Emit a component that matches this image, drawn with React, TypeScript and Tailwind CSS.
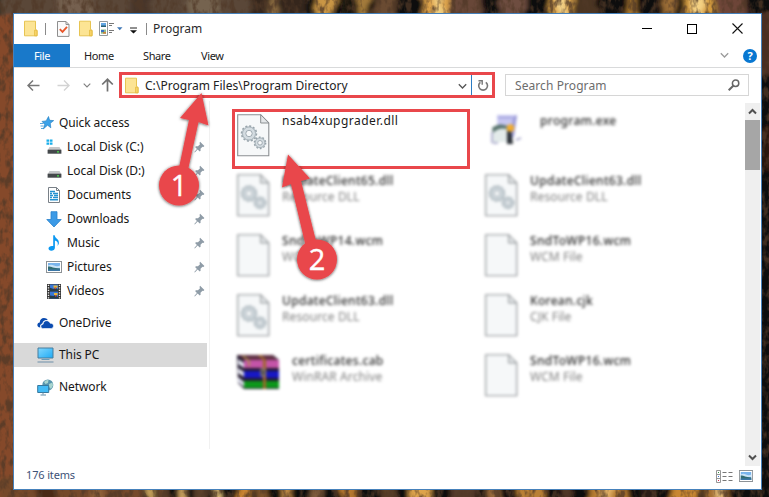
import React from 'react';

type FileKind = 'dll' | 'blank' | 'rar' | 'exe';

interface FileEntry {
  name: string;
  type?: string;
  kind: FileKind;
  blurred?: boolean;
}

const FILES: FileEntry[] = [
  { name: 'nsab4xupgrader.dll', kind: 'dll' },
  { name: 'program.exe', kind: 'exe', blurred: true },
  { name: 'UpdateClient65.dll', type: 'Resource DLL', kind: 'dll', blurred: true },
  { name: 'UpdateClient63.dll', type: 'Resource DLL', kind: 'dll', blurred: true },
  { name: 'SndToWP14.wcm', type: 'WCM File', kind: 'blank', blurred: true },
  { name: 'SndToWP16.wcm', type: 'WCM File', kind: 'blank', blurred: true },
  { name: 'UpdateClient63.dll', type: 'Resource DLL', kind: 'dll', blurred: true },
  { name: 'Korean.cjk', type: 'CJK File', kind: 'blank', blurred: true },
  { name: 'certificates.cab', type: 'WinRAR Archive', kind: 'rar', blurred: true },
  { name: 'SndToWP16.wcm', type: 'WCM File', kind: 'blank', blurred: true },
];

// x, width, color
const TOP_STRIPES: [number, number, string][] = [
  [0, 250, '#5a4638'], [60, 30, '#75614f'], [130, 22, '#46362c'], [190, 30, '#75634f'],
  [250, 60, '#35261b'], [272, 8, '#8a6a40'], [316, 18, '#c99645'], [340, 12, '#1d150e'],
  [358, 12, '#a37a3a'], [376, 20, '#6b4c33'], [424, 26, '#dca149'], [434, 8, '#f2cf80'],
  [450, 30, '#674637'], [500, 26, '#6e4d40'], [550, 24, '#dba448'], [558, 8, '#f3d187'],
  [576, 22, '#4c3424'], [626, 12, '#a5742f'], [662, 12, '#9a6c35'], [684, 30, '#d29a3d'],
  [694, 9, '#f4d183'], [715, 30, '#6d4537'],
];

const BOTTOM_STRIPES: [number, number, string][] = [
  [0, 145, '#754a2c'], [40, 14, '#492a18'], [90, 16, '#8f6038'], [149, 5, '#c9a35c'],
  [160, 10, '#6d4a2d'], [179, 8, '#d4aa63'], [196, 8, '#5b402c'], [214, 6, '#f1ce82'],
  [236, 14, '#c98432'], [256, 14, '#7c522b'], [282, 13, '#c08a45'], [310, 12, '#7d5a3b'],
  [340, 18, '#b5772e'], [380, 14, '#5c3f26'], [408, 22, '#dda34c'], [450, 26, '#563a2a'],
  [490, 12, '#98693a'], [520, 24, '#b98034'], [560, 12, '#513626'], [586, 40, '#b67c32'],
  [600, 12, '#e4b266'], [640, 14, '#2a1b12'], [670, 26, '#c98731'], [704, 28, '#a56f32'],
  [716, 6, '#ebc581'],
];

const Wallpaper: React.FC = () => (
  <svg className="absolute inset-0 h-full w-full" viewBox="0 0 769 497" preserveAspectRatio="none">
    <defs>
      <filter id="grain" x="0" y="0" width="100%" height="100%">
        <feTurbulence type="fractalNoise" baseFrequency="0.06 0.05" numOctaves="2" seed="7" result="noise" />
        <feDisplacementMap in="SourceGraphic" in2="noise" scale="14" xChannelSelector="R" yChannelSelector="G" />
        <feGaussianBlur stdDeviation="2.4 1.5" />
      </filter>
      <filter id="fiber" x="0" y="0" width="100%" height="100%">
        <feTurbulence type="fractalNoise" baseFrequency="0.16 0.09" numOctaves="3" seed="12" />
        <feColorMatrix values="0 0 0 0 0.08  0 0 0 0 0.04  0 0 0 0 0.02  3.5 0 0 0 -1.5" />
      </filter>
    </defs>
    <g filter="url(#grain)">
      <rect x="-10" y="-10" width="800" height="520" fill="#100d0a" />
      {TOP_STRIPES.map(([x, w, c]) => (
        <rect key={x} x={x} y="-10" width={w} height="35" fill={c} />
      ))}
      <rect x="-10" y="14" width="35" height="490" fill="#85492a" />
      {BOTTOM_STRIPES.map(([x, w, c]) => (
        <rect key={x} x={x} y="478" width={w} height="30" fill={c} />
      ))}
      <rect x="755" y="12" width="20" height="60" fill="#4a2d20" />
      <rect x="762" y="130" width="20" height="40" fill="#2b150e" />
    </g>
    <rect width="769" height="497" filter="url(#fiber)" opacity="0.75" />
  </svg>
);

const Folder: React.FC = () => (
  <svg width="14" height="17" viewBox="0 0 14 17">
    <path d="M.5 1.2h11v8.3l1.6 1v5.3H.5z" fill="#fce494" stroke="#e7c452" />
    <path d="M10.6 10.2h2.4v5.6h-2.4z" fill="#f9d56c" stroke="#e2b93c" strokeWidth=".8" />
  </svg>
);

const Chevron: React.FC<{ color: string; size?: number }> = ({ color, size = 9 }) => (
  <svg width={size} height="7" viewBox="0 0 9 7">
    <path d="M.8 1.3 4.5 5 8.2 1.3" fill="none" stroke={color} strokeWidth="1.3" />
  </svg>
);

const Thumb: React.FC<{ w: number; h: number }> = ({ w, h }) => (
  <svg width={w} height={h} viewBox="0 0 16 12" preserveAspectRatio="none">
    <rect x=".5" y=".5" width="15" height="11" fill="#fff" stroke="#8d9296" />
    <path d="M2 2h12v8H2z" fill="#79b4ec" />
    <path d="M2 4.5q3-1.5 6 0t6 0V7H2z" fill="#c9e2f6" />
    <path d="M2 5.5c4 0 5 1.8 12 2V10H2z" fill="#316c72" />
    <path d="M2 8.4h12V10H2z" fill="#3c77a7" />
  </svg>
);

const Pin: React.FC = () => (
  <svg width="11" height="12" viewBox="0 0 11 12">
    <path d="M6.1.8 10.4 5l-1 .9-.9-.2-2 2 .1 2-.9.9-2-2L.8 11.4.3 11l2.6-3-1.8-1.9.9-.9 2 .1 2-2-.5-1.4z" fill="#8f9ca7" />
  </svg>
);

const Disk: React.FC<{ system?: boolean }> = ({ system }) => (
  <svg width="16" height="16" viewBox="0 0 16 16">
    {system && <path d="M.5.5h2.6v2.3H.5zM3.8.5h2.7v2.3H3.8zM.5 3.5h2.6v2.3H.5zM3.8 3.5h2.7v2.3H3.8z" fill="#18aeea" />}
    <path d="M3.5 8h10l1.7 3H1.8z" fill="#c5c7c9" />
    <path d="M1.6 10.7h13.8v4H1.6z" fill="#44484b" />
    <path d="M11 12.3h2v1.2h-2z" fill="#4be34b" />
  </svg>
);

const Documents: React.FC = () => (
  <svg width="14" height="16" viewBox="0 0 14 16">
    <path d="M1.5.5h8l3 3v12h-11z" fill="#fff" stroke="#798087" />
    <path d="M9.5.5v3h3" fill="none" stroke="#798087" />
    <path d="M3 4.5h5M3 6.5h2M6 6.5h5M3 8.5h3M7 8.500h4M3 10.5h2M6 10.5h5M3 12.8h8" stroke="#2491d0" strokeWidth="1.4" />
  </svg>
);

const Downloads: React.FC = () => (
  <svg width="16" height="17" viewBox="0 0 16 17">
    <path d="M5 .7h6v7.8h4.2L8 16 .8 8.5H5z" fill="#3c9ae6" stroke="#2680cb" strokeWidth=".8" />
  </svg>
);

const Music: React.FC = () => (
  <svg width="12" height="16" viewBox="0 0 12 16">
    <path d="M5.2.2h1.5c.2 3 4.400 3.5 4.2 7.6 0 1.3-.7 2.4-1.4 3.2.9-3 .1-4.7-2.6-5.4v7.1c0 1.8-1.7 3-3.6 3C1.5 15.7.5 14.7.5 13.5c0-1.8 2.3-3 4.7-2.4z" fill="#0a98f2" />
  </svg>
);

const Videos: React.FC = () => (
  <svg width="14" height="15" viewBox="0 0 14 15">
    <path d="M0 0h14v15H0z" fill="#343434" />
    <path d="M1.5.8v14M12.5.8v14" stroke="#f1f1f1" strokeWidth="1.4" strokeDasharray="1.3 1.2" />
    <path d="M3 .5h8v6.7H3zM3 7.8h8v6.7H3z" fill="#3978d7" />
    <path d="M6.5 1.5h4v2.2h-4zM7 9h3.5v2H7z" fill="#e6b739" />
    <path d="M3 3.8 6.5 5l2-1 2.5 1.5v1.7H3zM3 11.5l3.5.5 2-1 2.5 2v1.5H3z" fill="#253c49" />
    <path d="M7.5 3.5H9V5H7.5zM8 11h1.5v1.5H8z" fill="#cf4938" />
  </svg>
);

const QuickStar: React.FC = () => (
  <svg width="14" height="14" viewBox="0 0 14 14">
    <path d="M8.5.5 9.6 4.3 13.7 4.6 10.3 7.3 10.8 11.8 7.6 9.2 3.5 12.8 4.7 8.2 2 5.4 6.1 4.9z" fill="#3ba2e9" stroke="#1979bd" strokeWidth=".6" />
    <path d="M0 7.5h3.5M.5 10h3M1 12.5h3" stroke="#2f91d3" strokeWidth=".8" />
  </svg>
);

const OneDrive: React.FC = () => (
  <svg width="17" height="12" viewBox="0 0 17 12">
    <path d="M3.4 10.5C1 10.5.1 9 .4 7.6c.2-1.3 1.2-2 2.3-2.1C2.9 2.7 4.6 1 7 1c1.7 0 3.1.8 3.9 2.2-3-.6-5.2.9-5.5 3.4-2 .2-2.7 2.2-2 3.9z" fill="#0a4bb0" />
    <path d="M6.3 11.5c-1.5 0-2.5-.9-2.4-2.3.1-1.2 1-2 2.2-2C6.2 5.1 7.7 3.7 9.6 3.7c1.7 0 3 1 3.5 2.5 2-.1 3.4 1 3.4 2.7 0 1.6-1.2 2.6-2.8 2.6z" fill="#0a4bb0" stroke="#fff" strokeWidth=".6" />
  </svg>
);

const Monitor: React.FC = () => (
  <svg width="17" height="16" viewBox="0 0 17 16">
    <defs>
      <linearGradient id="screen" x2="1" y2="1">
        <stop stopColor="#82d8ff" />
        <stop offset="1" stopColor="#1eaaf5" />
      </linearGradient>
    </defs>
    <path d="M1 1h15v10H1z" fill="url(#screen)" stroke="#477d9d" />
    <path d="M4.5 12.5h8" stroke="#6b9cba" />
    <path d="M.5 15h16" stroke="#7e9bb0" strokeWidth="1.2" />
  </svg>
);

const Network: React.FC = () => (
  <svg width="17" height="17" viewBox="0 0 17 17">
    <circle cx="10.8" cy="6" r="5.5" fill="#5895ae" />
    <path d="M7 3q2-2.5 4.5-2l-.5 3-2.5 1zM12 5l3.5-1.5.5 3-2 3.5-2-2z" fill="#a9d5cf" />
    <path d="M.7 6.5h11v7H.7z" fill="#43bbf5" stroke="#36799f" />
    <path d="M6 13.5v2M3.5 16H9" stroke="#658da7" />
  </svg>
);

const PageIcon: React.FC<{ gears?: boolean }> = ({ gears }) => (
  <svg width="33" height="43" viewBox="0 0 33 43">
    <path d="M.7.7h23L31.8 9v32.8H.7z" fill="#f6f8f9" stroke="#8b8f92" strokeWidth="1.1" />
    <path d="M23.7.7V9h8.1z" fill="#e4e7e9" stroke="#8b8f92" />
    {gears && (
      <g fill="#d4dce1" stroke="#98a4ab">
        <circle cx="12" cy="19.5" r="7.5" strokeWidth="1.5" strokeDasharray="2 1.92" />
        <circle cx="12" cy="19.5" r="6.5" strokeWidth=".7" />
        <circle cx="12" cy="19.5" r="3.2" fill="#f6f8f9" strokeWidth=".9" />
        <circle cx="23" cy="28.8" r="5.7" strokeWidth="1.4" strokeDasharray="1.7 1.88" />
        <circle cx="23" cy="28.8" r="4.8" strokeWidth=".7" />
        <circle cx="23" cy="28.8" r="2.3" fill="#f6f8f9" strokeWidth=".9" />
      </g>
    )}
  </svg>
);

const RarIcon: React.FC = () => (
  <svg width="43" height="36" viewBox="0 0 43 36">
    <path d="M0 1h36l6 5v29H7L1 29z" fill="#251b30" />
    <path d="M1 1h34l6 5H7z" fill="#603044" />
    <path d="M7 6h35v8H7z" fill="#c454a8" />
    <path d="M7 17h35v7H7z" fill="#1718c4" />
    <path d="M7 27h35v7H7z" fill="#0c981a" />
    <path d="m1 5 6 4v5l-6-4zM1 14l6 4v5l-6-4zM1 23l6 5v5l-6-5z" fill="#e2e5f1" />
    <path d="m21 1 5 5v29h3V6l-5-5z" fill="#a0682c" />
    <path d="M24 15h4v7h-4z" fill="#444" stroke="#a89c84" />
    <path d="m6 2 6 5v5" fill="none" stroke="#a89c40" strokeWidth="1.5" />
  </svg>
);

const ExeIcon: React.FC = () => (
  <svg width="33" height="34" viewBox="0 0 33 34">
    <path d="M7 2h20l-3 21-5 7-11-6z" fill="#c6c6f0" />
    <path d="m23 4 4-2-3 21-3 3z" fill="#9b9bd8" />
    <path d="M8 4h14v1H8z" fill="#8d8dd2" />
    <path d="M3 15h14l4 14H3z" fill="#e3ebea" />
    <path d="M2 15q7-6 15-2v3Q8 14 3 20z" fill="#54706a" />
    <path d="m17 17 4-1 2 15h-6z" fill="#2c3138" />
    <circle cx="20.5" cy="15" r="3.8" fill="#f0ac30" />
    <path d="M2 19v11M3 30h5M26 27l5-2" stroke="#9c9cc4" strokeWidth="1.5" />
  </svg>
);

const SIDEBAR = [
  { label: 'Local Disk (C:)', icon: <Disk system /> },
  { label: 'Local Disk (D:)', icon: <Disk /> },
  { label: 'Documents', icon: <Documents /> },
  { label: 'Downloads', icon: <Downloads /> },
  { label: 'Music', icon: <Music /> },
  { label: 'Pictures', icon: <Thumb w={16} h={12} /> },
  { label: 'Videos', icon: <Videos /> },
];

const ROOTS = [
  { label: 'OneDrive', icon: <OneDrive /> },
  { label: 'This PC', icon: <Monitor />, active: true },
  { label: 'Network', icon: <Network /> },
];

const TitleBar: React.FC = () => (
  <div className="flex h-[29px] shrink-0 items-center pl-[10px] pr-[18px]">
    <Folder />
    <span className="ml-[7px] h-3 w-px bg-[#8a8a8a]" />
    <svg className="ml-[11px]" width="13" height="17" viewBox="0 0 13 17">
      <path d="M.5 1.5H9l3 3v11.9H.5z" fill="#fafafa" stroke="#8e8e8e" />
      <path d="M9 1.5v3h3" fill="none" stroke="#8e8e8e" />
      <path d="m2.8 9.2 2.7 2.7L10 6.8" fill="none" stroke="#e8562a" strokeWidth="1.8" />
    </svg>
    <div className="ml-[9px]"><Folder /></div>
    <svg className="ml-[6px]" width="24" height="16" viewBox="0 0 24 16">
      <path d="M.5.5h8v14h-8z" fill="#fff" stroke="#959a9c" />
      <path d="M2 2h5v4H2z" fill="#64a7e4" />
      <path d="M2 4.5h5V6H2z" fill="#286176" />
      <path d="M2 8.5h5v4.2H2z" fill="#8dbc8a" />
      <path d="M2 9h3v2H2z" fill="#376fc3" />
      <path d="M4 11h3v1.7H4z" fill="#cb833e" />
      <path d="M10 2.500h5M10 4.5h3M10 9.5h5M10 11.5h3" stroke="#777" />
      <path d="M18 6.300h5.5l-2.750 3z" fill="#3f77b6" />
    </svg>
    <svg className="ml-[6px] mt-[3px]" width="9" height="7" viewBox="0 0 9 7">
      <path d="M1 1h7" stroke="#222" />
      <path d="M1 3.3h7L4.5 6.6z" fill="#111" />
    </svg>
    <span className="ml-[8px] h-3 w-px bg-[#8a8a8a]" />
    <span className="ml-[6px] text-[12px] text-[#2b2b2b]">Program</span>
    <div className="ml-auto flex items-center gap-[35px]">
      <span className="h-px w-[10px] bg-black" />
      <span className="h-[10px] w-[10px] border border-black" />
      <svg width="11" height="11" viewBox="0 0 11 11">
        <path d="m.5.5 10 10m0-10-10 10" stroke="#111" strokeWidth="1.1" />
      </svg>
    </div>
  </div>
);

const RibbonTabs: React.FC = () => (
  <div className="mt-px flex h-6 shrink-0 items-stretch border-b border-[#d9dadb] text-[11px] leading-6 tracking-[-0.4px] text-[#202020]">
    <div className="w-14 bg-[#1979ca] text-center text-white">File</div>
    <span className="ml-[14px] w-[59px]">Home</span>
    <span className="w-[58px]">Share</span>
    <span>View</span>
    <div className="ml-auto flex items-center gap-[14px] pr-1">
      <Chevron color="#9b9b9b" />
      <span className="flex h-[14px] w-[14px] items-center justify-center rounded-full bg-[#0877d1] text-[11px] font-bold leading-none tracking-normal text-white">?</span>
    </div>
  </div>
);

const AddressRow: React.FC = () => (
  <div className="flex h-[33px] shrink-0 items-center pl-[13px] pr-3 pt-px">
    <svg width="13" height="13" viewBox="0 0 13 13" fill="none" stroke="#777" strokeWidth="1.5">
      <path d="M12.5 6.5H1M6 1.5l-5 5 5 5" />
    </svg>
    <svg className="ml-[17px]" width="13" height="13" viewBox="0 0 13 13" fill="none" stroke="#d3d3d3" strokeWidth="1.4">
      <path d="M.5 6.5H12M7 1.5l5 5-5 5" />
    </svg>
    <div className="ml-[13px] flex"><Chevron color="#808080" size={8} /></div>
    <svg className="ml-[10px]" width="13" height="14" viewBox="0 0 13 14" fill="none" stroke="#717171" strokeWidth="1.7">
      <path d="M6.5 13.5V1.3M1.2 6.5l5.3-5.2 5.3 5.2" />
    </svg>
    <div className="ml-[5px] flex h-[26px] w-[376px] items-center border-[3px] border-[#e9474b] bg-white">
      <div className="ml-[3px]"><Folder /></div>
      <span className="ml-[6px] whitespace-nowrap pt-px text-[12px] tracking-[0.04px] text-[#222]">C:\Program Files\Program Directory</span>
      <div className="ml-auto mr-[4px] mt-[2px]"><Chevron color="#555" /></div>
      <div className="flex h-full w-[21px] items-center justify-center border-l border-[#2b7cc4] pl-px">
        <svg width="12" height="13" viewBox="0 0 12 13" fill="none" stroke="#777" strokeWidth="1.6">
          <path d="M8.8 3.3a4.4 4.4 0 1 1-5.4 0" />
          <path d="M1.5 1.8h3.7v3.9" strokeWidth="1.4" />
        </svg>
      </div>
    </div>
    <div className="ml-[10px] flex h-[22px] flex-1 items-center justify-between border border-[#d6d6d6] pl-[9px] pr-[8px]">
      <span className="pt-px text-[12px] tracking-[0.08px] text-[#6d6d6d]">Search Program</span>
      <svg width="12" height="12" viewBox="0 0 12 12" fill="none" stroke="#666">
        <circle cx="7.6" cy="4.2" r="3.2" strokeWidth="1.5" />
        <path d="M5.3 6.7.7 11.2" strokeWidth="2" />
      </svg>
    </div>
  </div>
);

const Sidebar: React.FC = () => (
  <div className="h-[348px] w-[196px] shrink-0 border-r border-[#f1f1f1] pt-[10px] text-[12px] leading-6 text-[#161616]">
    <div className="flex h-6 items-center pl-[26px]">
      <QuickStar />
      <span className="ml-[5px] tracking-[-0.1px]">Quick access</span>
    </div>
    {SIDEBAR.map((item) => (
      <div key={item.label} className="flex h-6 items-center pl-[31px] pr-[4px]">
        <span className="flex w-[17px] justify-center">{item.icon}</span>
        <span className="ml-[5px] flex-1 tracking-[-0.06px]">{item.label}</span>
        <Pin />
      </div>
    ))}
    {ROOTS.map((item) => (
      <div
        key={item.label}
        className={`mr-[2px] mt-2 flex h-6 items-center pl-[23px] ${item.active ? 'bg-[#d9d9d9]' : ''}`}
      >
        {item.icon}
        <span className="ml-[5px] tracking-[-0.1px]">{item.label}</span>
      </div>
    ))}
  </div>
);

const FileTile: React.FC<{ file: FileEntry }> = ({ file }) => {
  if (!file.blurred) {
    return (
      <div className="-ml-[5px] -mt-[5px] flex h-[60px] w-[238px] border-[3px] border-[#e9474b] pl-[2px] pt-[2px]">
        <PageIcon gears />
        <span className="-mt-px ml-[12px] text-[12px] leading-[16px] tracking-[0.46px] text-[#1b1b1b]">{file.name}</span>
      </div>
    );
  }

  return (
    <div className="flex h-[60px] blur-[1.4px]">
      {file.kind === 'dll' && <PageIcon gears />}
      {file.kind === 'blank' && <PageIcon />}
      {file.kind === 'rar' && <RarIcon />}
      {file.kind === 'exe' && <div className="-mt-px ml-[5px] w-[38px]"><ExeIcon /></div>}
      <div className="ml-[12px] text-[12px] leading-[16px]">
        <div className="-mt-px font-medium tracking-[0.3px] text-[#2b2b2b]">{file.name}</div>
        <div className="tracking-[0.1px] text-[#808080]">{file.type}</div>
      </div>
    </div>
  );
};

const ScrollBar: React.FC = () => (
  <div className="mr-px mt-[2px] flex h-[363px] w-[15px] shrink-0 flex-col items-center bg-[#efefef]">
    <svg className="my-[4px]" width="9" height="9" viewBox="0 0 9 9">
      <path d="M1 6.5 4.5 3 8 6.5" fill="none" stroke="#505050" strokeWidth="2" />
    </svg>
    <div className="h-[50px] w-full bg-[#a6a6a6]" />
    <svg className="mb-[4px] mt-auto" width="9" height="9" viewBox="0 0 9 9">
      <path d="M1 2.5 4.5 6 8 2.5" fill="none" stroke="#505050" strokeWidth="2" />
    </svg>
  </div>
);

const StatusBar: React.FC = () => (
  <div className="flex h-[20px] items-center pl-[12px] pr-[8px]">
    <span className="-mt-[2px] text-[11px] tracking-[-0.15px] text-[#3d5277]">176 items</span>
    <svg className="ml-auto mt-px" width="17" height="14" viewBox="0 0 17 14">
      <path d="M.5.5h4v12h-4zM.5 4.5h4M.5 8.5h4" fill="none" stroke="#969696" />
      <path d="M6.5 2.5h4M12.5 2.5h4M6.5 6.5h4M12.5 6.5h4M6.5 10.5h4M12.5 10.5h4" stroke="#777" />
      <path d="M2 2h1v1H2z" fill="#329445" />
      <path d="M2 6h1v1H2z" fill="#3876dd" />
      <path d="M2 10h1v1H2z" fill="#db2c4f" />
    </svg>
    <div className="ml-[6px]"><Thumb w={14} h={12} /></div>
  </div>
);

const Callouts: React.FC = () => (
  <svg className="pointer-events-none absolute inset-0" width="769" height="497" viewBox="0 0 769 497">
    <defs>
      <filter id="drop" x="-30%" y="-30%" width="160%" height="160%">
        <feDropShadow dx="0" dy="0.5" stdDeviation="1.8" floodColor="#000" floodOpacity="0.7" />
      </filter>
    </defs>
    <g fill="#e9474b">
      <g filter="url(#drop)">
        <path d="M201.5 93 208.5 125.5 198.5 122 188 170H178.5L189 120 180 118z" />
        <circle cx="179" cy="185.5" r="20" />
      </g>
      <g filter="url(#drop)">
        <path d="M288 154.5 310 178.5 301 181 316.5 243 305.5 245 291 184 282 187.5z" />
        <circle cx="317" cy="259.5" r="20" />
      </g>
    </g>
    <g fill="#fff" stroke="#fff" strokeWidth=".4" fontFamily="'Open Sans', 'Noto Sans', sans-serif" fontSize="29" textAnchor="middle">
      <text x="179" y="196">1</text>
      <text x="317" y="270">2</text>
    </g>
  </svg>
);

export default function App() {
  return (
    <div className="relative h-[497px] w-[769px] overflow-hidden bg-[#17100c] pl-[13px] pt-[13px] font-['Noto_Sans','Open_Sans',sans-serif] [&_svg]:shrink-0">
      <Wallpaper />
      <div className="relative flex h-[477px] w-[749px] flex-col border border-[#4681bb] bg-white">
        <TitleBar />
        <RibbonTabs />
        <AddressRow />
        <div className="flex h-[365px] shrink-0">
          <Sidebar />
          <div className="grid flex-1 auto-rows-[60px] grid-cols-[248px_1fr] content-start pl-[27px] pt-[13px]">
            {FILES.map((file, i) => (
              <FileTile key={i} file={file} />
            ))}
          </div>
          <ScrollBar />
        </div>
        <StatusBar />
      </div>
      <Callouts />
    </div>
  );
}
